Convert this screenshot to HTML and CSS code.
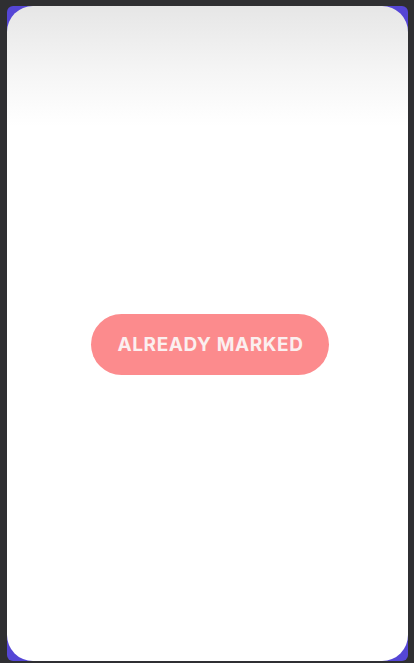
FILE: index.html
```html
<!DOCTYPE html>
<html>
<head>
<meta charset="utf-8">
<link rel="stylesheet" href="styles.css">
</head>
<body>
<div class="frame">
  <div class="card">
    <button class="marked">ALREADY MARKED</button>
  </div>
</div>
</body>
</html>
```
FILE: styles.css
```css
html, body {
  margin: 0;
  height: 100%;
}
body {
  background: #2f2f32;
  padding: 6px 6px 2px 7px;
  box-sizing: border-box;
  font-family: Inter, "Noto Sans", sans-serif;
}
.frame {
  height: 100%;
  background: #5546d6;
  border-radius: 6px;
}
.card {
  height: 100%;
  border-radius: 26px;
  background: linear-gradient(#e6e6e6 0px, #f5f5f5 65px, #ffffff 120px, #ffffff 100%);
  display: flex;
  justify-content: center;
  padding-top: 308px;
  box-sizing: border-box;
}
.marked {
  width: 238px;
  height: 61px;
  border: none;
  border-radius: 31px;
  background: #fc8b8d;
  color: #fbefef;
  font-family: Inter, "Noto Sans", sans-serif;
  font-weight: 700;
  font-size: 19px;
  letter-spacing: 0.6px;
  padding: 0 0 0 1px;
  margin-left: 5px;
}
```
